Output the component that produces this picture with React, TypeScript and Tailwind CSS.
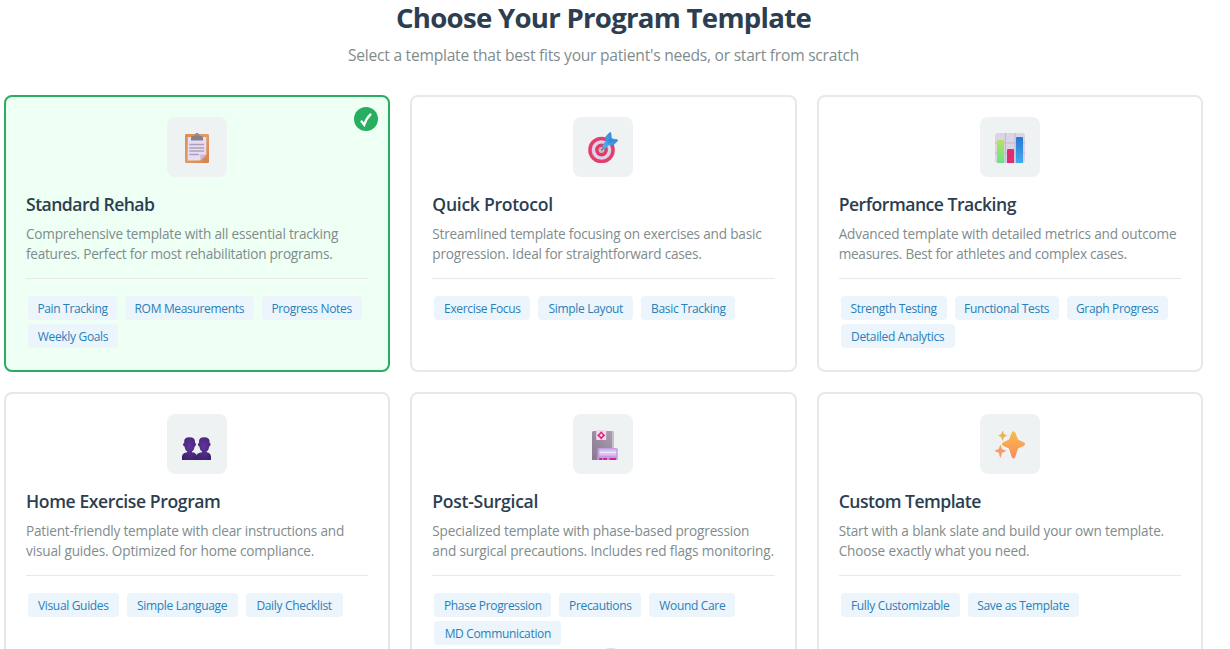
import type { ReactNode } from 'react';

type Line = [text: string, tracking: string];
type Tag = [text: string, width: string];

interface Template {
  title: string;
  titleTracking: string;
  icon: ReactNode;
  lines: Line[];
  tags: Tag[];
  selected?: boolean;
}

const ClipboardIcon = () => (
  <svg width="30" height="32" viewBox="0 0 30 32">
    <defs>
      <linearGradient id="board" x1="0" y1="0" x2="1" y2="1">
        <stop offset="0" stopColor="#d98c55" />
        <stop offset=".5" stopColor="#e39a60" />
        <stop offset="1" stopColor="#d9804a" />
      </linearGradient>
    </defs>
    <rect x="3" y="2" width="24" height="29" rx="1.3" fill="url(#board)" />
    <path d="M5.7 5h18.6v17.5l-6 6.1H5.7z" fill="#e6dcf3" />
    <path d="M18.3 28.6v-5.2q0-.9.9-.9h5.1z" fill="#c9b9dd" />
    <path d="M9 8.500V5.600Q9 4 10.800 4h1.800Q12.800 1 15 1t2.400 3h1.800Q21 4 21 5.600v2.900z" fill="#877f8c" />
    <circle cx="15" cy="3" r=".8" fill="#c7a18b" />
    <path d="M7.300 12.600h14.800M7.300 16h14.800M7.300 19.100h14.800M7.300 22.500h9.500" stroke="#aaa1b8" strokeWidth="1.5" />
  </svg>
);

const TargetIcon = () => (
  <svg width="30" height="32" viewBox="0 0 30 32">
    <defs>
      <linearGradient id="dart" x1="0" y1="1" x2="1" y2="0">
        <stop offset="0" stopColor="#55b7ee" />
        <stop offset="1" stopColor="#2478d8" />
      </linearGradient>
    </defs>
    <clipPath id="targetClip"><path d="M0 0h30v31H0z" /></clipPath>
    <g clipPath="url(#targetClip)">
      <circle cx="13.5" cy="18" r="13.3" fill="#e43e6c" />
      <circle cx="13.5" cy="18" r="9.8" fill="#dfd2e9" />
      <circle cx="13.5" cy="18" r="6.4" fill="#e43865" />
      <circle cx="13.5" cy="18" r="3" fill="#cbb8d4" />
    </g>
    <path d="m13.700 17.800 5-5" stroke="#837b94" strokeWidth="1.8" strokeLinecap="round" />
    <path d="M15.200 16.200q-1.600-2 0-3.800l3-3.300-.4-4.600 3.900-4q1-.7 1.200.6l.5 4.400 1.200 1.500 4.300.5q1.600.3.500 1.600l-4 3.800-4.600-.1-3 3.300q-1.200 1.400-2.600.1z" fill="url(#dart)" stroke="#3690df" strokeWidth=".5" />
    <path d="m20 9.500 3-3M20.700 11.200l4.100-3.300" stroke="#216eca" strokeWidth=".7" />
  </svg>
);

const ChartIcon = () => (
  <svg width="30" height="32" viewBox="0 0 30 32">
    <defs>
      <linearGradient id="greenBar" x1="0" y1="0" x2="0" y2="1">
        <stop offset="0" stopColor="#b4e35b" />
        <stop offset="1" stopColor="#65e586" />
      </linearGradient>
      <linearGradient id="blueBar" x1="0" y1="0" x2="0" y2="1">
        <stop offset="0" stopColor="#2878d5" />
        <stop offset="1" stopColor="#45a9ed" />
      </linearGradient>
    </defs>
    <rect x="0" y="1" width="30" height="30" rx="3" fill="#dcd3e4" />
    <path d="M0 11h30M0 21h30M10.4 1v30M20 1v30" stroke="#c3bacb" strokeWidth="1.1" />
    <path d="M2 31V9q0-1 1-1h5q1 0 1 1v22z" fill="url(#greenBar)" />
    <path d="M12 31V18q0-1 1-1h5q1 0 1 1v13z" fill="#df2e70" />
    <path d="M21 31V6q0-1 1-1h5q1 0 1 1v25z" fill="url(#blueBar)" />
  </svg>
);

const PeopleIcon = () => (
  <svg width="30" height="32" viewBox="0 0 30 32">
    <defs>
      <radialGradient id="person" cx=".5" cy=".4" r=".7">
        <stop offset="0" stopColor="#60349b" />
        <stop offset="1" stopColor="#3c216b" />
      </radialGradient>
    </defs>
    <path d="M2.200 13q-.5-4.800 5.300-4.800t5.500 4.800v1q1.200.1 1 1.600t-1.300 1.800q-.5 3.800-2.700 5v.8q4.200.3 5 4v3.800H0v-3.800q.5-3.600 5.200-4v-.8q-2.200-1.200-2.700-5Q1 17 1 15.500T2.200 14z" fill="url(#person)" />
    <path d="M17 13q-.5-4.800 5.200-4.800t5.400 4.800v1q1.200.1 1 1.600t-1.300 1.800q-.5 3.800-2.700 5v.8q3.600.3 4.400 4v3.800H14v-3.800q.8-3.600 6-4v-.8q-2.200-1.200-2.700-5-1.500-.4-1.400-1.800t1.100-1.600z" fill="url(#person)" />
  </svg>
);

const HospitalIcon = () => (
  <svg width="30" height="32" viewBox="0 0 30 32">
    <defs>
      <linearGradient id="tower" x1="0" y1="1" x2="1" y2="0">
        <stop offset="0" stopColor="#887991" />
        <stop offset="1" stopColor="#aaa0b0" />
      </linearGradient>
    </defs>
    <path d="M4 31V3.500Q4 2 5.500 2H24q1.800 0 1.800 1.500V31z" fill="url(#tower)" />
    <path d="M24 2.200q1.800 0 1.800 1.500V19H24z" fill="#c9c0c8" />
    <rect x="8.2" y="1" width="10" height="10" rx=".8" fill="#efd8f2" />
    <path d="M11.500 4 13.200 2.300 14.900 4v.7h.7L17.200 6.300l-1.600 1.700h-.7v.7l-1.700 1.700-1.700-1.700V8h-.7L9.200 6.300l1.600-1.600h.7z" fill="#de2a69" />
    <path d="m13.200 4.500 1.700 1.800-1.700 1.800-1.700-1.800z" fill="#efd8f2" />
    <path d="M9.500 31V20.500q0-1.500 1.500-1.500h17q1.800 0 1.800 1.500V31z" fill="#bfa2dd" />
    <path d="M11.500 20.500h16.800v6H11.500z" fill="#dac2f4" />
    <path d="M11.500 23.400h16.800" stroke="#f2e8ff" strokeWidth="1.2" />
    <path d="M11.200 29h3v2h-3zM15.300 29H19v2h-3.700zM21.500 29H28v2h-6.500z" fill="#d91ba4" />
  </svg>
);

const SparklesIcon = () => (
  <svg width="30" height="32" viewBox="0 0 30 32">
    <defs>
      <linearGradient id="spark" x1="0" y1="0" x2="0" y2="1">
        <stop offset="0" stopColor="#f5bd4c" />
        <stop offset="1" stopColor="#fb8b5b" />
      </linearGradient>
    </defs>
    <path d="M16.800 3.400Q18.500 1 20.200 3.400L23 10.600 29 13.600Q31 15.200 29 16.700L23 19.400 20.200 28.300Q18.500 30.800 16.800 28.300L14 19.400 8 16.700Q6 15.200 8 13.600L14 10.600z" fill="url(#spark)" />
    <path d="m7.600 2 1.200 3.200L11.700 6.600 8.800 8 7.600 11.500 6.400 8 3.700 6.600 6.400 5.200z" fill="#eab052" stroke="#eab052" strokeWidth=".4" />
    <path d="m5.400 16.200 1.500 4 4 1.700-4 1.600-1.500 5-1.500-5-4-1.600 4-1.700z" fill="#fa9961" stroke="#fa9961" strokeWidth=".5" />
  </svg>
);

const templates: Template[] = [
  {
    title: 'Standard Rehab', titleTracking: 'tracking-[-0.54px]', icon: <ClipboardIcon />, selected: true,
    lines: [
      ['Comprehensive template with all essential tracking', 'tracking-[-0.2px]'],
      ['features. Perfect for most rehabilitation programs.', 'tracking-[-0.25px]'],
    ],
    tags: [['Pain Tracking', 'w-[89px]'], ['ROM Measurements', 'w-[128.6px]'], ['Progress Notes', 'w-[100px]'], ['Weekly Goals', 'w-[90px]']],
  },
  {
    title: 'Quick Protocol', titleTracking: 'tracking-[-0.29px]', icon: <TargetIcon />,
    lines: [
      ['Streamlined template focusing on exercises and basic', 'tracking-[-0.2px]'],
      ['progression. Ideal for straightforward cases.', 'tracking-[-0.22px]'],
    ],
    tags: [['Exercise Focus', 'w-[96px]'], ['Simple Layout', 'w-[95px]'], ['Basic Tracking', 'w-[94px]']],
  },
  {
    title: 'Performance Tracking', titleTracking: 'tracking-[-0.5px]', icon: <ChartIcon />,
    lines: [
      ['Advanced template with detailed metrics and outcome', 'tracking-[-0.16px]'],
      ['measures. Best for athletes and complex cases.', 'tracking-[-0.26px]'],
    ],
    tags: [['Strength Testing', 'w-[106px]'], ['Functional Tests', 'w-[104px]'], ['Graph Progress', 'w-[101px]'], ['Detailed Analytics', 'w-[114px]']],
  },
  {
    title: 'Home Exercise Program', titleTracking: 'tracking-[-0.41px]', icon: <PeopleIcon />,
    lines: [
      ['Patient-friendly template with clear instructions and', 'tracking-[-0.2px]'],
      ['visual guides. Optimized for home compliance.', 'tracking-[-0.16px]'],
    ],
    tags: [['Visual Guides', 'w-[90.6px]'], ['Simple Language', 'w-[111px]'], ['Daily Checklist', 'w-[97px]']],
  },
  {
    title: 'Post-Surgical', titleTracking: 'tracking-[-0.3px]', icon: <HospitalIcon />,
    lines: [
      ['Specialized template with phase-based progression', 'tracking-[-0.16px]'],
      ['and surgical precautions. Includes red flags monitoring.', 'tracking-[-0.16px]'],
    ],
    tags: [['Phase Progression', 'w-[117px]'], ['Precautions', 'w-[82px]'], ['Wound Care', 'w-[86px]'], ['MD Communication', 'w-[127px]']],
  },
  {
    title: 'Custom Template', titleTracking: 'tracking-[-0.52px]', icon: <SparklesIcon />,
    lines: [
      ['Start with a blank slate and build your own template.', 'tracking-[-0.16px]'],
      ['Choose exactly what you need.', 'tracking-[-0.16px]'],
    ],
    tags: [['Fully Customizable', 'w-[119px]'], ['Save as Template', 'w-[111px]']],
  },
];

function TemplateCard({ title, titleTracking, icon, lines, tags, selected }: Template) {
  return (
    <article
      className={`relative h-[277px] rounded-lg border-2 p-5 ${selected ? 'border-[#27ae60] bg-[#eefff4]' : 'border-[#e8e8e8] bg-white'}`}
    >
      {selected && (
        <span className="absolute top-[10px] right-[10px] flex size-6 items-center justify-center rounded-full bg-[#27ae60]">
          <svg width="14" height="16" viewBox="0 0 14 16" fill="none" stroke="white" strokeWidth="2.3">
            <path d="M2 9.800 5.200 13.800Q7.200 7.400 12 2.800" />
          </svg>
        </span>
      )}
      <div className="mx-auto flex size-[60px] items-center justify-center rounded-lg bg-[#eef2f3] pt-[2px]">{icon}</div>
      <h3 className={`mt-[15px] h-6 text-[17.6px] leading-6 font-semibold whitespace-nowrap text-[#2c3e50] ${titleTracking}`}>
        {title}
      </h3>
      <p className="mt-2 text-[13.6px] leading-5 text-[#7f8c8d]">
        {lines.map(([text, tracking]) => (
          <span key={text} className={`block whitespace-nowrap ${tracking}`}>{text}</span>
        ))}
      </p>
      <div className="mt-[14px] flex flex-wrap gap-x-2 gap-y-1 border-t border-[#e8e8e8] pt-[17px] pl-[2px]">
        {tags.map(([text, width]) => (
          <span
            key={text}
            className={`flex h-6 items-center justify-center rounded bg-[#ebf5fb] pt-[2px] text-[12px] whitespace-nowrap tracking-[-0.33px] text-[#2980b9] ${width}`}
          >
            {text}
          </span>
        ))}
      </div>
    </article>
  );
}

export default function App() {
  return (
    <main className="relative h-[649px] overflow-hidden bg-white pr-[27px] pl-1 font-['Open_Sans','Noto_Sans',sans-serif]">
      <header className="text-center">
        <h1 className="h-[34px] text-[27.6px] leading-[34px] font-bold tracking-[-0.73px] text-[#2c3e50]">
          Choose Your Program Template
        </h1>
        <p className="mt-[9px] h-6 text-[15.6px] leading-6 tracking-[-0.24px] text-[#7f8c8d]">
          Select a template that best fits your patient&apos;s needs, or start from scratch
        </p>
      </header>
      <section className="mt-[28px] grid grid-cols-3 gap-5">
        {templates.map((template) => (
          <TemplateCard key={template.title} {...template} />
        ))}
      </section>
      <span className="absolute top-[648px] left-[605px] h-3 w-3 rounded-t-sm bg-[#e2e2e2]" />
    </main>
  );
}
